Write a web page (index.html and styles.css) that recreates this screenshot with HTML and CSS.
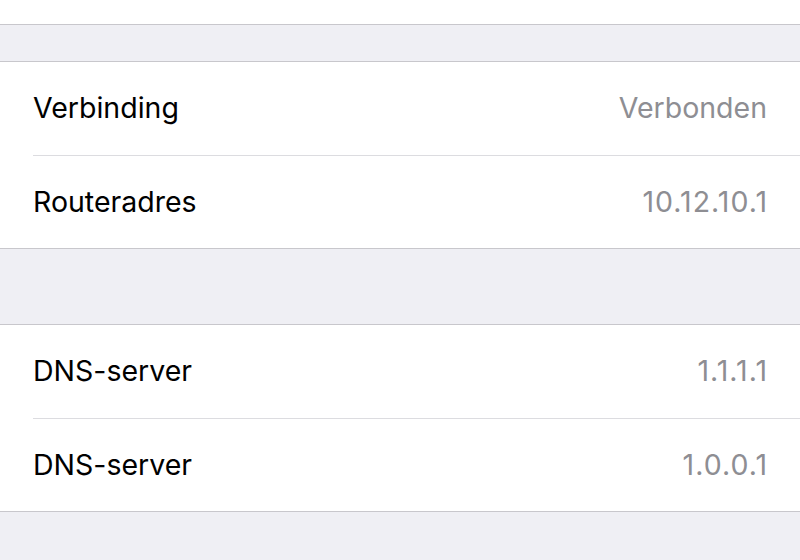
FILE: index.html
```html
<!doctype html>
<html lang="nl">
	<head>
		<meta name="viewport" content="width=device-width,initial-scale=1" />
		<title>Wi-Fi details</title>
		<link rel="stylesheet" href="styles.css">
	</head>
	<body>
		<div class="top"></div>

		<section class="group group-first">
			<div class="row">
				<span class="label">Verbinding</span>
				<span class="value">Verbonden</span>
			</div>
			<div class="row">
				<span class="label">Routeradres</span>
				<span class="value value-num">10.12.10.1</span>
			</div>
		</section>

		<section class="group group-second">
			<div class="row">
				<span class="label">DNS-server</span>
				<span class="value value-num">1.1.1.1</span>
			</div>
			<div class="row">
				<span class="label">DNS-server</span>
				<span class="value value-num">1.0.0.1</span>
			</div>
		</section>
	</body>
</html>
```

FILE: styles.css
```css
body {
	margin: 0;
	background: #efeff4;
	font-family: Inter, "Noto Sans", sans-serif;
}

.top {
	block-size: 24px;
	background: #fff;
	border-bottom: 1px solid #c8c7cc;
}

.group {
	background: #fff;
	border-top: 1px solid #c8c7cc;
	border-bottom: 1px solid #c8c7cc;

	& .row {
		display: flex;
		align-items: center;
		justify-content: space-between;
		box-sizing: border-box;
		block-size: 93px;
		margin-left: 33px;
		padding-right: 33px;
	}

	& .row + .row {
		border-top: 1px solid #dcdce0;
	}
}

.group-first {
	margin-top: 36px;
}

.group-second {
	margin-top: 75px;
}

.label {
	font-size: 28.5px;
	color: #000;
	padding-bottom: 2px;
}

.value {
	font-size: 28.5px;
	color: #8e8e93;
	padding-bottom: 2px;
}

.value-num {
	letter-spacing: 1px;
	margin-right: -1px;
}
```
